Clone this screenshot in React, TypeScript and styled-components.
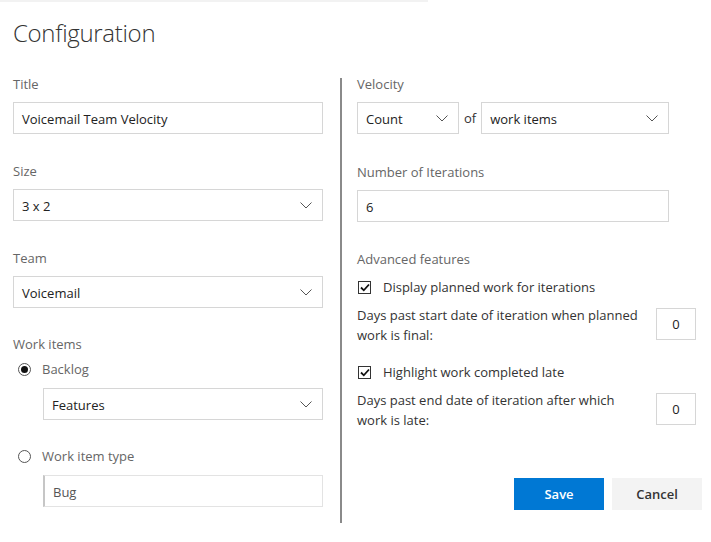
import React from "react";
import styled, { createGlobalStyle } from "styled-components";

const GlobalStyle = createGlobalStyle`
  html, body { margin: 0; padding: 0; background: #fff; }
  body {
    font-family: "Segoe UI", "Open Sans", "Noto Sans", sans-serif;
    font-size: 13px;
    color: #222;
  }
  * { box-sizing: border-box; }
`;

const Page = styled.div`
  width: 711px;
  height: 542px;
  position: relative;
  overflow: hidden;
  background: #fff;
`;

const TopRule = styled.div`
  width: 428px;
  height: 2px;
  background: #f2f2f2;
`;

const Heading = styled.h1`
  margin: 13px 0 0 13px;
  font-size: 24px;
  font-weight: 300;
  line-height: 36px;
  letter-spacing: -0.3px;
  color: #333;
`;

const Columns = styled.div`
  display: flex;
  margin-top: 23px;
  padding-left: 13px;
`;

const Column = styled.div<{ $width: number }>`
  width: ${(p) => p.$width}px;
  display: flex;
  flex-direction: column;
`;

const Divider = styled.div`
  width: 2px;
  height: 445px;
  margin: 4px 15px 0 17px;
  background: #8a8a8a;
`;

const Label = styled.div<{ $gap?: number; $after?: number }>`
  font-size: 13px;
  line-height: 20px;
  color: #666;
  margin-top: ${(p) => p.$gap ?? 0}px;
  margin-bottom: ${(p) => p.$after ?? 8}px;
`;

const TextBox = styled.div<{ $width?: number; $indent?: number; $disabled?: boolean }>`
  width: ${(p) => (p.$width ? `${p.$width}px` : "auto")};
  margin-left: ${(p) => p.$indent ?? 0}px;
  height: 32px;
  border: 1px solid ${(p) => (p.$disabled ? "#e3e3e3" : "#d6d6d6")};
  border-left: ${(p) => (p.$disabled ? "2px solid #c6c6c6" : "1px solid #d6d6d6")};
  padding: 1px 8px 0;
  display: flex;
  align-items: center;
  justify-content: space-between;
  font-size: 13px;
  color: ${(p) => (p.$disabled ? "#555" : "#222")};
  background: #fff;
  flex-shrink: 0;
`;

const SmallBox = styled(TextBox)`
  width: 40px;
  justify-content: center;
  padding: 0;
`;

const Chevron = () => (
  <svg width="12" height="7" viewBox="0 0 12 7" style={{ marginRight: 2, marginTop: -1 }}>
    <polyline points="0.5,0.5 6,6 11.5,0.5" fill="none" stroke="#555" strokeWidth="1" />
  </svg>
);

const RadioRow = styled.div<{ $gap?: number }>`
  display: flex;
  align-items: center;
  height: 20px;
  margin-top: ${(p) => p.$gap ?? 0}px;
  margin-bottom: 9px;
  padding-left: 5px;
  font-size: 13px;
  color: #666;
`;

const RadioCircle = styled.span<{ $checked?: boolean }>`
  width: 13px;
  height: 13px;
  border-radius: 50%;
  border: 1px solid #555;
  margin-right: 11px;
  display: flex;
  align-items: center;
  justify-content: center;
  &::after {
    content: "";
    width: 7px;
    height: 7px;
    border-radius: 50%;
    background: ${(p) => (p.$checked ? "#111" : "transparent")};
  }
`;

const Row = styled.div`
  display: flex;
  align-items: center;
`;

const OfText = styled.span`
  margin: 0 5px;
  font-size: 13px;
  color: #333;
`;

const CheckRow = styled.div<{ $gap?: number }>`
  display: flex;
  align-items: center;
  height: 20px;
  margin-top: ${(p) => p.$gap ?? 0}px;
  margin-bottom: 8px;
  padding-left: 1px;
  font-size: 13px;
  color: #333;
`;

const CheckBox = styled.span`
  width: 13px;
  height: 13px;
  border: 1px solid #333;
  margin-right: 12px;
  display: flex;
  align-items: center;
  justify-content: center;
`;

const DaysRow = styled.div`
  display: flex;
  align-items: center;
  justify-content: space-between;
  width: 339px;
`;

const DaysText = styled.div`
  width: 290px;
  font-size: 13px;
  line-height: 20px;
  color: #333;
`;

const SmallBoxRaised = styled(SmallBox)`
  margin-top: -3px;
`;

const Buttons = styled.div`
  display: flex;
  justify-content: flex-end;
  gap: 8px;
  margin-top: 48px;
  width: 345px;
`;

const Button = styled.button<{ $primary?: boolean }>`
  width: 90px;
  height: 32px;
  border: none;
  font-family: inherit;
  font-size: 13px;
  font-weight: 600;
  background: ${(p) => (p.$primary ? "#0078d4" : "#f3f3f3")};
  color: ${(p) => (p.$primary ? "#fff" : "#333")};
`;

const Check = () => (
  <svg width="10" height="9" viewBox="0 0 10 9">
    <polyline points="1,4.5 3.8,7.3 9,1.5" fill="none" stroke="#111" strokeWidth="1.8" />
  </svg>
);

export default function App() {
  return (
    <Page>
      <GlobalStyle />
      <TopRule />
      <Heading>Configuration</Heading>
      <Columns>
        <Column $width={310}>
          <Label>Title</Label>
          <TextBox>Voicemail Team Velocity</TextBox>
          <Label $gap={27}>Size</Label>
          <TextBox>
            3 x 2 <Chevron />
          </TextBox>
          <Label $gap={27}>Team</Label>
          <TextBox>
            Voicemail <Chevron />
          </TextBox>
          <Label $gap={26} $after={5}>Work items</Label>
          <RadioRow>
            <RadioCircle $checked />
            Backlog
          </RadioRow>
          <TextBox $indent={30}>
            Features <Chevron />
          </TextBox>
          <RadioRow $gap={26}>
            <RadioCircle />
            Work item type
          </RadioRow>
          <TextBox $indent={30} $disabled>
            Bug
          </TextBox>
        </Column>
        <Divider />
        <Column $width={345}>
          <Label>Velocity</Label>
          <Row>
            <TextBox $width={102}>
              Count <Chevron />
            </TextBox>
            <OfText>of</OfText>
            <TextBox $width={188}>
              work items <Chevron />
            </TextBox>
          </Row>
          <Label $gap={28}>Number of Iterations</Label>
          <TextBox $width={312}>6</TextBox>
          <Label $gap={27}>Advanced features</Label>
          <CheckRow>
            <CheckBox>
              <Check />
            </CheckBox>
            Display planned work for iterations
          </CheckRow>
          <DaysRow>
            <DaysText>Days past start date of iteration when planned work is final:</DaysText>
            <SmallBoxRaised>0</SmallBoxRaised>
          </DaysRow>
          <CheckRow $gap={17}>
            <CheckBox>
              <Check />
            </CheckBox>
            Highlight work completed late
          </CheckRow>
          <DaysRow>
            <DaysText>Days past end date of iteration after which work is late:</DaysText>
            <SmallBoxRaised>0</SmallBoxRaised>
          </DaysRow>
          <Buttons>
            <Button $primary>Save</Button>
            <Button>Cancel</Button>
          </Buttons>
        </Column>
      </Columns>
    </Page>
  );
}
